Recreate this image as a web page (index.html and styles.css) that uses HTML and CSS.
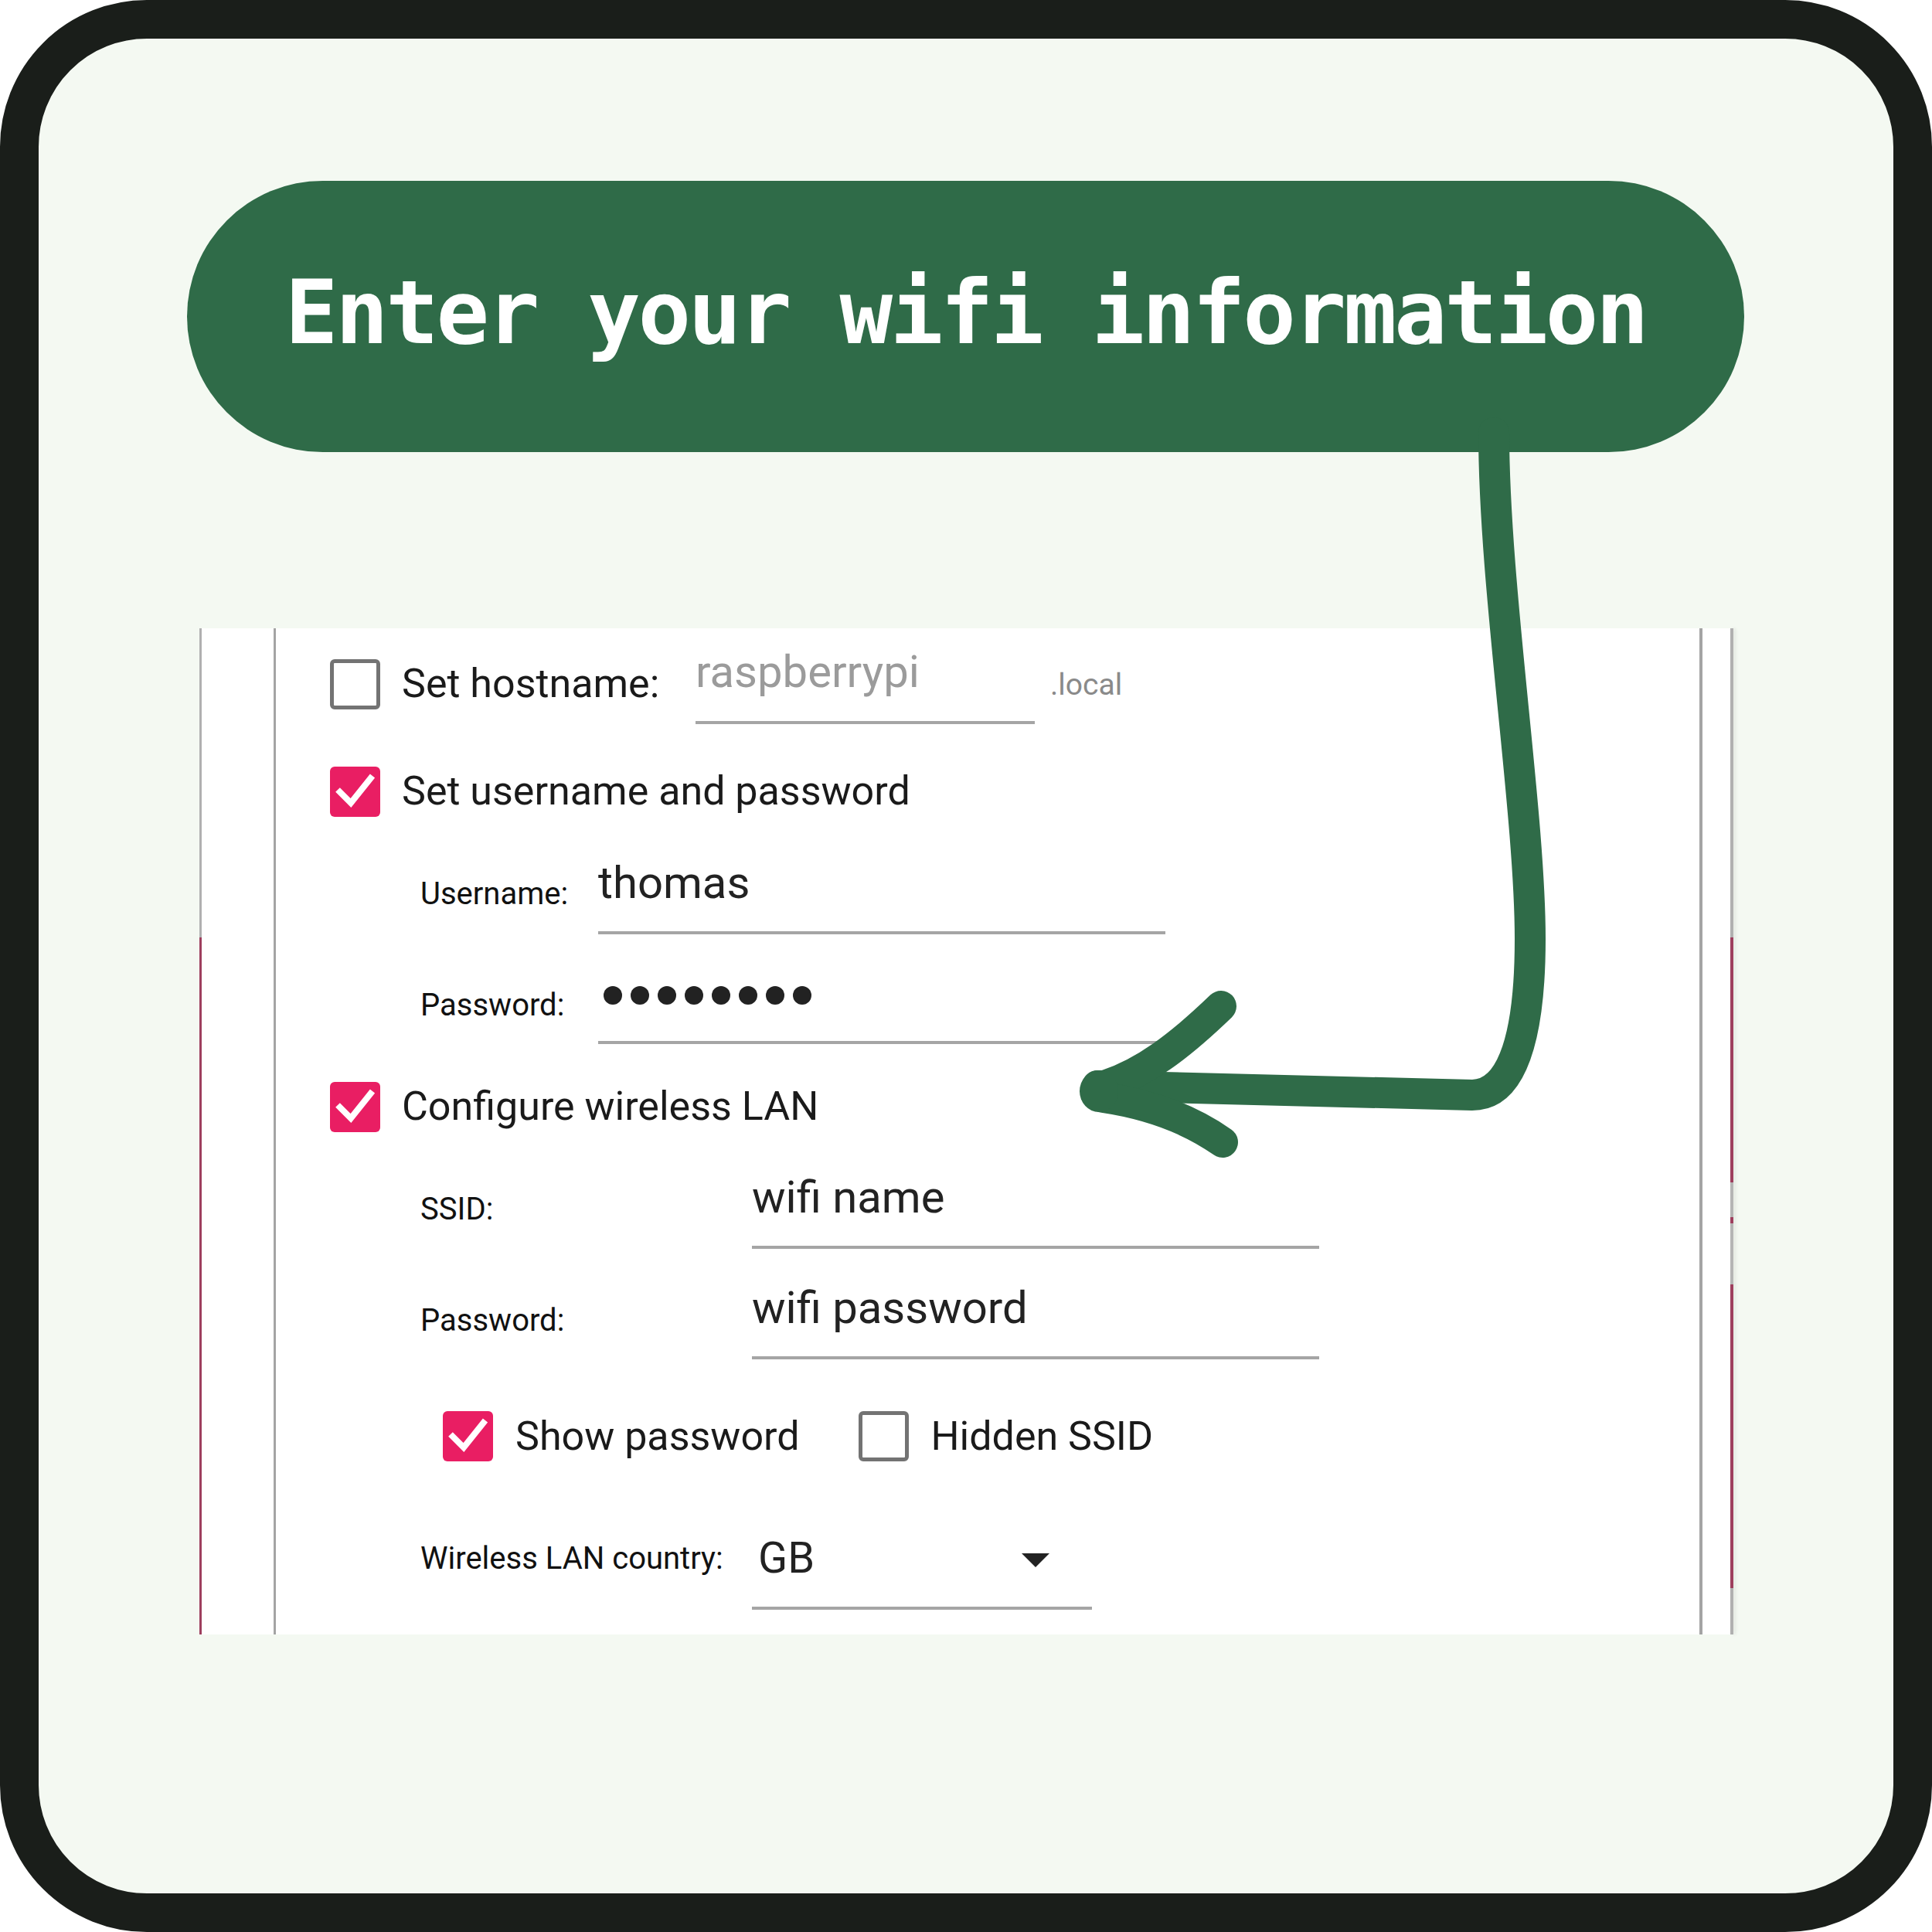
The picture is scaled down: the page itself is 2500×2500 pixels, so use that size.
FILE: index.html
```html
<!DOCTYPE html>
<html lang="en">
<head>
<meta charset="utf-8">
<title>Enter your wifi information</title>
<link rel="stylesheet" href="styles.css">
</head>
<body>
<div class="frame">
  <div class="pill"><span class="title">Enter your wifi information</span></div>

  <div class="panel">
    <div class="edge edge-left"></div>
    <div class="gutter-left"></div>
    <div class="content">
      <div class="row row-a">
        <span class="cb cb-off"></span>
        <span class="cb-label host-label">Set hostname:</span>
        <div class="field host-field"><span class="field-text placeholder">raspberrypi</span></div>
        <span class="suffix">.local</span>
      </div>

      <div class="row row-b">
        <span class="cb cb-on"><svg viewBox="0 0 65 65"><path d="M10 30 L27 47 L55 12" fill="none" stroke="#fff" stroke-width="8"/></svg></span>
        <span class="cb-label">Set username and password</span>
      </div>

      <div class="row row-c">
        <span class="label label-short">Username:</span>
        <div class="field field-long"><span class="field-text">thomas</span></div>
      </div>

      <div class="row row-d">
        <span class="label label-short">Password:</span>
        <div class="field field-long">
          <div class="dots" role="img" aria-label="hidden password">
            <span class="dot"></span><span class="dot"></span><span class="dot"></span><span class="dot"></span>
            <span class="dot"></span><span class="dot"></span><span class="dot"></span><span class="dot"></span>
          </div>
        </div>
      </div>

      <div class="row row-e">
        <span class="cb cb-on"><svg viewBox="0 0 65 65"><path d="M10 30 L27 47 L55 12" fill="none" stroke="#fff" stroke-width="8"/></svg></span>
        <span class="cb-label">Configure wireless LAN</span>
      </div>

      <div class="row row-f">
        <span class="label label-wide">SSID:</span>
        <div class="field field-long"><span class="field-text">wifi name</span></div>
      </div>

      <div class="row row-g">
        <span class="label label-wide">Password:</span>
        <div class="field field-long"><span class="field-text">wifi password</span></div>
      </div>

      <div class="row row-h">
        <span class="cb cb-on"><svg viewBox="0 0 65 65"><path d="M10 30 L27 47 L55 12" fill="none" stroke="#fff" stroke-width="8"/></svg></span>
        <span class="cb-label show-label">Show password</span>
        <span class="cb cb-off hidden-cb"></span>
        <span class="cb-label">Hidden SSID</span>
      </div>

      <div class="row row-i">
        <span class="label label-wide">Wireless LAN country:</span>
        <div class="field field-select"><span class="select-text">GB</span><span class="caret"></span></div>
      </div>
    </div>
    <div class="gutter-right"></div>
    <div class="edge edge-right"></div>
  </div>

  <svg class="arrow" viewBox="0 0 2500 2500" aria-hidden="true">
    <g fill="none" stroke="#2f6b48" stroke-width="40" stroke-linecap="round" stroke-linejoin="round">
      <path d="M1933 560 C1933 760 1980 1050 1980 1215 C1980 1360 1950 1417 1905 1417 L1420 1405"/>
      <path d="M1432 1404 C1480 1388 1525 1355 1580 1302"/>
      <path d="M1428 1420 C1495 1430 1545 1452 1582 1478"/>
    </g>
    <ellipse cx="1422" cy="1412" rx="25" ry="27" fill="#2f6b48"/>
  </svg>
</div>
</body>
</html>
```

FILE: styles.css
```css
* { box-sizing: border-box; }

body {
  margin: 0;
  background: #ffffff;
  font-family: Roboto, "Liberation Sans", sans-serif;
}

.frame {
  position: relative;
  width: 2500px;
  height: 2500px;
  border: 50px solid #1a1e1a;
  border-radius: 190px;
  background: #f4f9f2;
  overflow: hidden;
  display: flex;
  flex-direction: column;
  align-items: flex-start;
}

.pill {
  margin: 184px 0 0 192px;
  width: 2015px;
  height: 351px;
  border-radius: 176px;
  background: #2f6b48;
  display: flex;
  justify-content: center;
  align-items: flex-start;
  padding-top: 114px;
}

.title {
  font-family: "DejaVu Sans Mono", monospace;
  font-weight: 700;
  font-size: 114px;
  line-height: 114px;
  letter-spacing: -3.4px;
  color: #ffffff;
  white-space: nowrap;
}

.panel {
  margin: 228px 0 0 208px;
  width: 1985px;
  height: 1302px;
  background: #ffffff;
  display: flex;
}

.edge-left {
  width: 3px;
  background: linear-gradient(to bottom, #b0b0b0 0 400px, #9e3f5e 400px 100%);
}

.gutter-left { width: 93px; }
.gutter-right { width: 36px; }

.edge-right {
  width: 4px;
  background: linear-gradient(to bottom,
    #b0b0b0 0 400px,
    #9e3f5e 400px 717px,
    #b5b5b5 717px 762px,
    #9e3f5e 762px 770px,
    #b5b5b5 770px 849px,
    #9e3f5e 849px 1242px,
    #b0b0b0 1242px 100%);
  box-shadow: 3px 0 4px rgba(0, 0, 0, 0.08);
}

.content {
  width: 1849px;
  border-left: 3px solid #a4a4a4;
  border-right: 4px solid #a4a4a4;
  padding: 27px 0 0 70px;
}

.row {
  display: flex;
  align-items: flex-start;
}

.row-b { margin-top: 55px; }
.row-c { margin-top: 56px; padding-left: 114px; }
.row-d { margin-top: 48px; padding-left: 114px; }
.row-e { margin-top: 49px; }
.row-f { margin-top: 55px; padding-left: 114px; }
.row-g { margin-top: 47px; padding-left: 114px; }
.row-h { margin-top: 67px; padding-left: 146px; }
.row-i { margin-top: 97px; padding-left: 114px; }

.cb {
  flex: none;
  width: 65px;
  height: 65px;
  border-radius: 6px;
}

.cb-off {
  border: 5px solid #737373;
  background: #ffffff;
}

.cb-on { background: #e91e63; }

.cb-on svg {
  display: block;
  width: 65px;
  height: 65px;
}

.cb-label {
  flex: none;
  font-size: 52px;
  line-height: 52px;
  color: #1a1a1a;
  margin: 6px 0 0 28px;
  white-space: nowrap;
}

.row-a .cb { margin-top: 13px; }
.row-a .host-label { margin-top: 19px; width: 380px; }

.row-h .cb-label { margin-top: 7px; margin-left: 29px; }
.row-h .show-label { margin-right: 76px; }
.row-h .hidden-cb + .cb-label { margin-left: 29px; }

.label {
  flex: none;
  font-size: 40px;
  line-height: 40px;
  color: #111111;
  padding-left: 3px;
  white-space: nowrap;
}

.label-short { width: 233px; margin-top: 24px; }
.label-wide { width: 432px; margin-top: 25px; }
.row-g .label { margin-top: 26px; }
.row-i .label { margin-top: 9px; }

.field {
  flex: none;
  border-bottom: 4px solid #a5a5a5;
}

.field-text {
  display: block;
  font-size: 58px;
  line-height: 58px;
  color: #222222;
  padding-bottom: 34px;
  white-space: nowrap;
}

.host-field { width: 439px; }
.host-field .field-text { padding-bottom: 35px; }
.placeholder { color: #9b9b9b; }

.suffix {
  font-size: 39px;
  line-height: 39px;
  color: #8a8a8a;
  margin: 27px 0 0 20px;
}

.field-long { width: 734px; }

.dots {
  display: flex;
  gap: 11px;
  padding: 19px 0 47px 7px;
}

.dot {
  width: 24px;
  height: 24px;
  border-radius: 50%;
  background: #222222;
}

.field-select {
  width: 440px;
  display: flex;
  justify-content: space-between;
  align-items: flex-start;
  padding: 0 55px 0 8px;
}

.select-text {
  font-size: 56px;
  line-height: 56px;
  color: #222222;
  padding-bottom: 35px;
}

.caret {
  width: 0;
  height: 0;
  margin-top: 22px;
  border-left: 18px solid transparent;
  border-right: 18px solid transparent;
  border-top: 18px solid #222222;
}

.arrow {
  position: absolute;
  left: -50px;
  top: -50px;
  width: 2500px;
  height: 2500px;
  pointer-events: none;
}
```
